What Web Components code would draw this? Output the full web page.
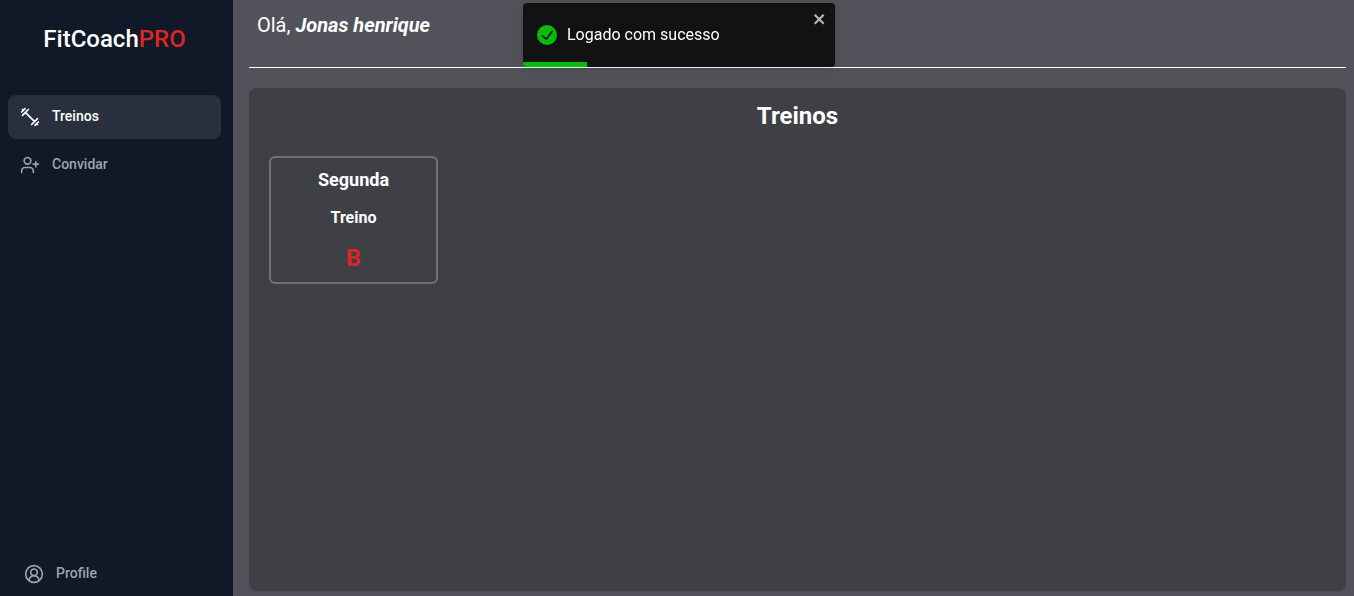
<!DOCTYPE html>
<html lang="pt-BR">
<head>
<meta charset="utf-8">
<meta name="viewport" content="width=device-width, initial-scale=1">
<title>FitCoachPRO</title>
<style>
  html, body { margin: 0; height: 100%; }
  body { font-family: Roboto, "Liberation Sans", sans-serif; font-size: 16px; line-height: 24px; color: #fff; background: #52525b; }
</style>
</head>
<body>
<fit-app>
  <fit-sidebar slot="sidebar">
    <fit-nav-item icon="dumbbell" active>Treinos</fit-nav-item>
    <fit-nav-item icon="user-plus">Convidar</fit-nav-item>
    <fit-nav-item slot="footer" icon="profile">Profile</fit-nav-item>
  </fit-sidebar>
  <fit-greeting>Jonas henrique</fit-greeting>
  <fit-panel heading="Treinos">
    <fit-workout-card day="Segunda" label="Treino">B</fit-workout-card>
  </fit-panel>
  <fit-toast slot="toast">Logado com sucesso</fit-toast>
</fit-app>

<script>
class FitElement extends HTMLElement {
  constructor() {
    super();
    this.attachShadow({ mode: 'open' });
  }
  connectedCallback() {
    this.shadowRoot.innerHTML = this.render();
  }
}

customElements.define('fit-app', class extends FitElement {
  render() {
    return `<style>
      :host { display: grid; grid-template-columns: 233px minmax(0, 1fr); min-height: 100vh; }
      main { display: flex; flex-direction: column; gap: 20px; padding: 0 8px 5px 16px; }
      .toast { position: fixed; top: 3px; left: 50%; transform: translateX(-50%); width: 316px; max-width: 100%; box-sizing: border-box; padding-left: 4px; }
    </style>
    <slot name="sidebar"></slot>
    <main><slot></slot></main>
    <div class="toast"><slot name="toast"></slot></div>`;
  }
});

customElements.define('fit-sidebar', class extends FitElement {
  render() {
    return `<style>
      :host { display: flex; flex-direction: column; background: #111827; }
      .brand { padding: 23px 4px 40px 0; text-align: center; font-size: 24px; line-height: 32px; font-weight: 500; }
      .brand span { color: #dc2626; }
      nav { flex: 1; display: flex; flex-direction: column; gap: 4px; padding: 0 12px 0 8px; }
      footer { padding: 0 12px; }
    </style>
    <div class="brand">FitCoach<span>PRO</span></div>
    <nav><slot></slot></nav>
    <footer><slot name="footer"></slot></footer>`;
  }
});

const ICONS = {
  'dumbbell': '<path d="m6.5 6.5 11 11M21 21l-1-1M3 3l1 1M18 22l4-4M2 6l4-4M3 10l7-7M14 21l7-7"/>',
  'user-plus': '<path d="M16 21v-2a4 4 0 0 0-4-4H6a4 4 0 0 0-4 4v2"/><circle cx="9" cy="7" r="4"/><path d="M19 8v6M22 11h-6"/>',
  'profile': '<path d="M18 20a6 6 0 0 0-12 0"/><circle cx="12" cy="10" r="4"/><circle cx="12" cy="12" r="10"/>'
};

customElements.define('fit-nav-item', class extends FitElement {
  render() {
    return `<style>
      :host { display: block; color: #9ca3af; }
      :host([active]) { color: #fff; }
      a { display: flex; align-items: flex-start; gap: 12px; padding: 12px; border-radius: 8px; color: inherit; text-decoration: none; font-size: 14px; line-height: 18px; font-weight: 500; }
      :host([active]) a { background: #29303d; }
      svg { width: 20px; height: 20px; fill: none; stroke: currentColor; stroke-width: 2; stroke-linecap: round; stroke-linejoin: round; }
    </style>
    <a href="#"><svg viewBox="0 0 24 24" aria-hidden="true">${ICONS[this.getAttribute('icon')]}</svg><slot></slot></a>`;
  }
});

customElements.define('fit-greeting', class extends FitElement {
  render() {
    return `<style>
      :host { display: block; border-bottom: 1px solid #fff; padding: 11px 8px 28px; font-size: 20px; line-height: 28px; }
      em { font-style: italic; font-weight: 700; }
    </style>
    Olá, <em><slot></slot></em>`;
  }
});

customElements.define('fit-panel', class extends FitElement {
  render() {
    return `<style>
      :host { display: block; flex: 1; border-radius: 8px; background: #3f3f46; padding: 12px 20px; box-shadow: 0 1px 3px rgba(0, 0, 0, .1); }
      h1 { margin: 0 0 24px; text-align: center; font-size: 24px; line-height: 32px; font-weight: 700; }
      .cards { display: flex; flex-wrap: wrap; gap: 20px; }
    </style>
    <h1>${this.getAttribute('heading')}</h1>
    <div class="cards"><slot></slot></div>`;
  }
});

customElements.define('fit-workout-card', class extends FitElement {
  render() {
    return `<style>
      :host { display: flex; flex-direction: column; gap: 12px; box-sizing: border-box; width: 169px; padding: 8px; border: 2px solid #71717a; border-radius: 6px; text-align: center; font-weight: 700; }
      h2, p { margin: 0; }
      h2 { font-size: 18px; line-height: 28px; }
      p { font-size: 16px; line-height: 24px; }
      .plan { font-size: 24px; line-height: 32px; color: #dc2626; }
    </style>
    <h2>${this.getAttribute('day')}</h2>
    <p>${this.getAttribute('label')}</p>
    <p class="plan"><slot></slot></p>`;
  }
});

customElements.define('fit-toast', class extends FitElement {
  render() {
    return `<style>
      :host { display: block; position: relative; overflow: hidden; height: 64px; border-radius: 4px; background: #121212; box-shadow: 0 1px 10px rgba(0, 0, 0, .1), 0 2px 15px rgba(0, 0, 0, .05); }
      .body { display: flex; align-items: center; gap: 10px; height: 100%; padding: 0 14px; box-sizing: border-box; }
      .body svg { width: 20px; height: 20px; flex: none; fill: #07bc0c; }
      button { position: absolute; top: 8px; right: 7px; padding: 0; border: 0; background: none; color: #fff; opacity: .7; line-height: 0; }
      button svg { width: 16px; height: 16px; fill: currentColor; display: block; }
      .bar { position: absolute; left: 0; bottom: 0; width: 64px; height: 5px; background: #07bc0c; }
    </style>
    <div class="body" role="status">
      <svg viewBox="0 0 24 24" aria-hidden="true"><path d="M12 0a12 12 0 1012 12A12.014 12.014 0 0012 0zm6.927 8.2l-6.845 9.289a1.011 1.011 0 01-1.43.188l-4.888-3.908a1 1 0 111.25-1.562l4.076 3.261 6.227-8.451a1 1 0 111.61 1.183z"/></svg>
      <slot></slot>
    </div>
    <button type="button" aria-label="Fechar"><svg viewBox="-1 0 16 16" aria-hidden="true"><path fill-rule="evenodd" d="M7.71 8.23l3.75 3.75-1.48 1.48-3.75-3.75-3.75 3.75L1 11.98l3.75-3.75L1 4.48 2.48 3l3.75 3.75L9.98 3l1.48 1.48-3.75 3.75z"/></svg></button>
    <div class="bar"></div>`;
  }
});
</script>
</body>
</html>
